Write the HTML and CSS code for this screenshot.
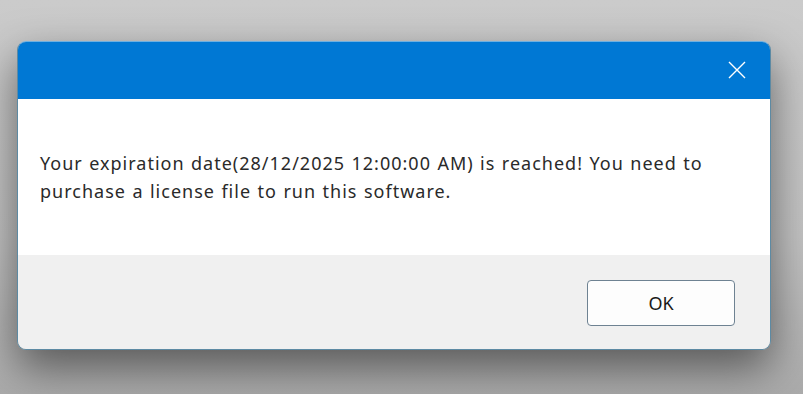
FILE: index.html
```html
<!DOCTYPE html>
<html lang="en">
<head>
    <meta charset="UTF-8">
    <meta name="viewport" content="width=device-width, initial-scale=1.0">
    <title>License</title>
    <link rel="stylesheet" href="styles.css">
</head>

<body>
    <div class="dialog">
        <div class="title-bar">
            <span class="close">
                <svg width="18" height="18" viewBox="0 0 18 18">
                    <path d="M1 1 L17 17 M17 1 L1 17" stroke="#ffffff" stroke-width="1.4" fill="none"/>
                </svg>
            </span>
        </div>

        <!-- Message -->
        <div class="message">
            <p>Your expiration date(28/12/2025 12:00:00 AM) is reached! You need to purchase a license file to run this software.</p>
        </div>

        <div class="footer">
            <button class="ok-button">OK</button>
        </div>
    </div>
</body>
</html>
```

FILE: styles.css
```css
body, html {
    margin: 0;
    padding: 0;
    height: 100%;
    font-family: 'Noto Sans', 'Open Sans', sans-serif;
    background: linear-gradient(#cbcbcb, #c2c2c2 60%, #ababab);
    overflow: hidden;
}
body {
    padding: 41px 0 0 17px;
    box-sizing: border-box;
}
.dialog {
    width: 754px;
    border-radius: 9px;
    overflow: hidden;
    border: 1px solid #5d8aa3;
    border-top-color: #6fb0e0;
    box-sizing: border-box;
    box-shadow: 0 18px 44px rgba(0,0,0,0.5);
}
.title-bar {
    height: 57px;
    background-color: #0078d4;
    display: flex;
    justify-content: flex-end;
    align-items: center;
}
.close {
    width: 18px;
    height: 18px;
    margin-right: 24px;
    margin-top: -1px;
    display: flex;
}
.message {
    height: 156px;
    background-color: #ffffff;
    padding: 0 22px;
    display: flex;
    align-items: center;
}
.message p {
    margin: 0;
    font-size: 18px;
    letter-spacing: 1px;
    word-spacing: 0.8px;
    line-height: 28px;
    color: #2a2a2a;
}
.footer {
    height: 94px;
    background-color: #f0f0f0;
    display: flex;
    justify-content: flex-end;
    padding: 25px 35px 0 0;
    box-sizing: border-box;
}
.ok-button {
    width: 148px;
    height: 46px;
    background-color: #fdfdfd;
    border: 1px solid #6e8292;
    border-radius: 4px;
    font-family: 'Noto Sans', 'Open Sans', sans-serif;
    font-size: 18px;
    color: #1a1a1a;
    cursor: pointer;
}
```
